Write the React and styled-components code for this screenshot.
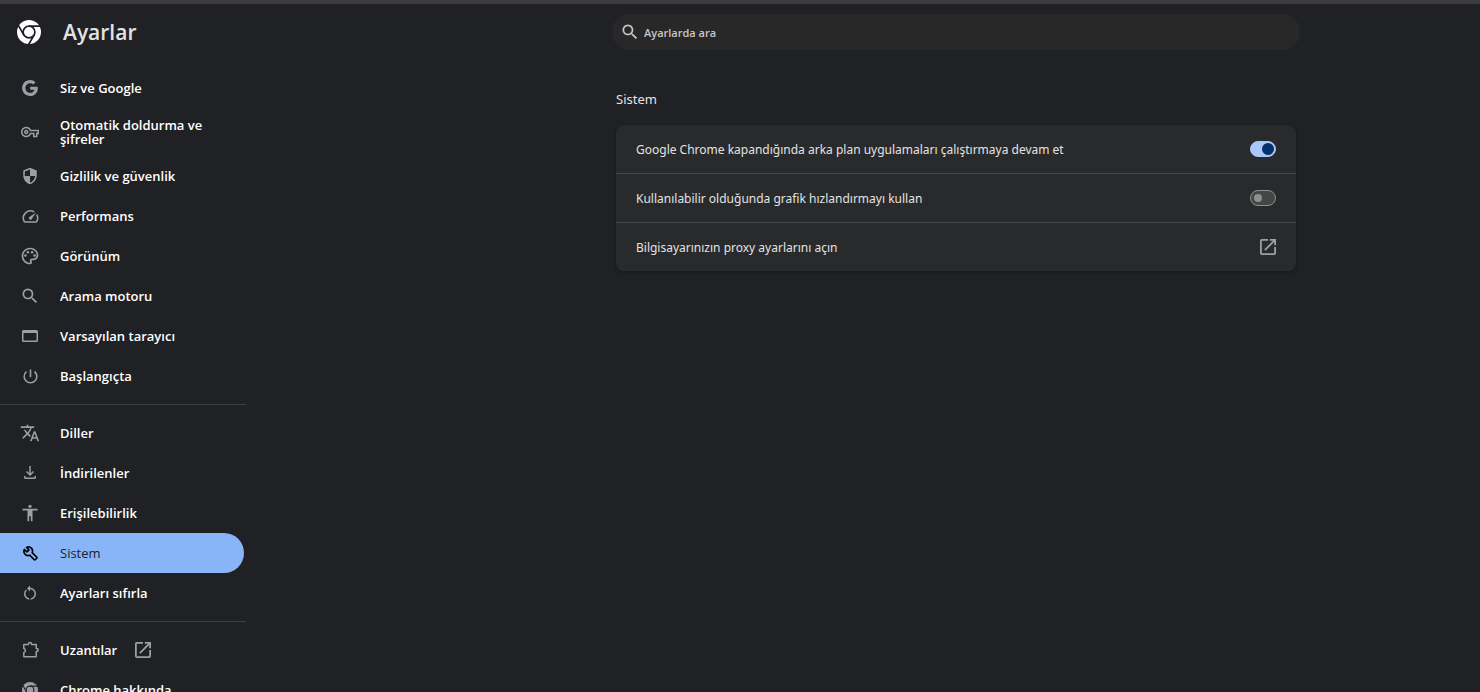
import React, { useState } from "react";
import styled, { createGlobalStyle } from "styled-components";
import {
  MdOutlinePalette,
  MdSearch,
  MdPowerSettingsNew,
  MdTranslate,
  MdAccessibility,
  MdOutlineVpnKey,
  MdRestartAlt,
} from "react-icons/md";

const GlobalStyle = createGlobalStyle`
  *, *::before, *::after { box-sizing: border-box; }
  body {
    margin: 0;
    background: #202124;
    color: #e3e3e3;
    font-family: "Open Sans", "Noto Sans", sans-serif;
    font-size: 13px;
  }
`;

const Page = styled.div`
  display: flex;
  height: 100vh;
  overflow: hidden;
  border-top: 4px solid #3c3c3c;
`;

const Sidebar = styled.aside`
  flex: 0 0 246px;
  overflow: hidden;
`;

const Brand = styled.header`
  display: flex;
  align-items: center;
  gap: 22px;
  height: 64px;
  padding: 0 0 8px 17px;
  color: #fff;
`;

const Title = styled.h1`
  margin: 0;
  color: #e3e3e3;
  font-size: 21px;
  font-weight: 600;
  line-height: 28px;
`;

const Group = styled.ul`
  margin: 0;
  padding: 0 0 8px;
  list-style: none;

  & + & {
    padding-top: 8px;
    border-top: 1px solid #3c3e41;
  }
`;

const NavLink = styled.a`
  display: flex;
  align-items: center;
  gap: 20px;
  min-height: 40px;
  margin-right: 2px;
  padding: 10px 20px;
  border-radius: 0 20px 20px 0;
  background: ${(p) => (p.$active ? "#8ab4f8" : "transparent")};
  color: ${(p) => (p.$active ? "#202124" : "#fff")};
  font-weight: ${(p) => (p.$active ? 500 : 600)};
  line-height: 14px;
  text-decoration: none;
`;

const IconSlot = styled.span`
  display: flex;
  flex: 0 0 20px;
  align-items: center;
  justify-content: center;
  height: 20px;
  color: ${(p) => (p.$dark ? "#000" : "#9aa0a6")};
`;

const LinkText = styled.span`
  display: flex;
  align-items: center;
  gap: 18px;

  svg {
    color: #9aa0a6;
  }
`;

const Main = styled.main`
  flex: 1;
  min-width: 0;
  padding: 10px 0 0 186px;
`;

const SearchBox = styled.label`
  display: flex;
  align-items: center;
  gap: 4px;
  max-width: 688px;
  height: 36px;
  margin: 0 auto;
  padding: 0 8px;
  border-radius: 18px;
  background: #282828;
  color: #c7c7c7;
`;

const SearchInput = styled.input`
  flex: 1;
  min-width: 0;
  padding: 0;
  border: 0;
  outline: 0;
  background: transparent;
  color: #e3e3e3;
  font: 600 11px "Open Sans", "Noto Sans", sans-serif;

  &::placeholder {
    color: #c7c7c7;
    opacity: 1;
  }
`;

const Section = styled.section`
  max-width: 680px;
  margin: 0 auto;
  padding-top: 39px;
`;

const SectionTitle = styled.h2`
  margin: 0 0 16px;
  font-family: "Noto Sans", sans-serif;
  font-size: 13px;
  font-weight: 400;
  line-height: 20px;
`;

const Card = styled.div`
  border-radius: 8px;
  background: #292a2c;
  box-shadow: 0 1px 3px 1px rgba(0, 0, 0, 0.2);
`;

const Row = styled.label`
  display: flex;
  align-items: center;
  justify-content: space-between;
  height: 48px;
  padding: 0 20px;
  color: inherit;
  font-family: "Noto Sans", sans-serif;
  font-size: 12px;
  text-decoration: none;

  & + & {
    height: 49px;
    border-top: 1px solid #47484a;
  }

  svg {
    color: #9aa0a6;
  }
`;

const Switch = styled.input`
  appearance: none;
  display: flex;
  align-items: center;
  width: 26px;
  height: 16px;
  margin: 0;
  padding: 0 3px;
  border: 1px solid #8f918f;
  border-radius: 8px;
  background: #444746;

  &::before {
    content: "";
    width: 8px;
    height: 8px;
    border-radius: 50%;
    background: #8f918f;
  }

  &:checked {
    justify-content: flex-end;
    padding: 0 1px;
    border-color: #a8c7fa;
    background: #a8c7fa;
  }

  &:checked::before {
    width: 12px;
    height: 12px;
    background: #062e6f;
  }
`;

const Svg = ({ size, box = 24, children }) => (
  <svg width={size} height={size} viewBox={`0 0 ${box} ${box}`} fill="currentColor" aria-hidden="true">
    {children}
  </svg>
);

const ChromeIcon = ({ size }) => (
  <Svg size={size}>
    <circle cx="12" cy="12" r="12" />
    <g fill="none" stroke="#202124" strokeWidth="1.7">
      <circle cx="12" cy="12" r="5.9" />
      <path d="M12 6.1H24M6.9 14.95.9 4.56M17.1 14.95l-6 10.39" />
    </g>
  </Svg>
);

const GoogleIcon = () => (
  <Svg size={16}>
    <path d="M12.2 10v4.5h6.3c-.5 2.7-2.9 4.7-6.3 4.7-3.900 0-7.100-3.200-7.100-7.200s3.200-7.200 7.100-7.200c1.800 0 3.400.6 4.600 1.800l3.400-3.400C18.100 1.200 15.400 0 12.200 0 5.500 0 .2 5.400.2 12s5.300 12 12 12c6.900 0 11.500-4.900 11.500-11.700 0-.8-.1-1.600-.2-2.300z" />
  </Svg>
);

const ShieldIcon = () => (
  <Svg size={18}>
    <path
      fillRule="evenodd"
      d="M12 1 3 4.500v6.500c0 5.600 3.800 10.700 9 12 5.200-1.300 9-6.400 9-12V4.500zM12 3.300V12h6.900c-.5 4.100-3.300 7.700-6.900 8.900V12H5.100V6z"
    />
  </Svg>
);

const SpeedIcon = () => (
  <Svg size={19}>
    <path d="m20.380 8.570-1.230 1.850a8 8 0 0 1-.22 7.580H5.070A8 8 0 0 1 15.580 6.850l1.850-1.230A10 10 0 0 0 3.350 19a2 2 0 0 0 1.720 1h13.850a2 2 0 0 0 1.740-1 10 10 0 0 0-.27-10.440zm-9.790 6.840a2 2 0 0 0 2.830 0l5.660-8.490-8.490 5.660a2 2 0 0 0 0 2.830z" />
  </Svg>
);

const WindowIcon = () => (
  <Svg size={20} box={20}>
    <path
      fillRule="evenodd"
      d="M3.500 4h13A1.500 1.500 0 0 1 18 5.500v9a1.500 1.500 0 0 1-1.500 1.500h-13A1.500 1.500 0 0 1 2 14.500v-9A1.500 1.500 0 0 1 3.500 4zm0 3v7.500h13V7z"
    />
  </Svg>
);

const DownloadIcon = () => (
  <Svg size={20} box={20}>
    <path d="M10 13 6 9l1.060-1.060 2.190 2.190V3h1.500v7.130l2.190-2.190L14 9zm-4.500 3c-.8 0-1.500-.7-1.500-1.500V13h1.500v1.500h9V13H16v1.500c0 .8-.7 1.500-1.500 1.500z" />
  </Svg>
);

const WrenchIcon = () => (
  <Svg size={15}>
    <path
      fill="none"
      stroke="currentColor"
      strokeWidth="2.700"
      strokeLinejoin="round"
      d="M2.300 5.600 6.200 9.500 9.500 6.200 5.700 2.400C8.300 1.100 11.400 1.500 13.400 3.500c1.900 1.900 2.300 4.700 1.300 7.200l7.300 7.300c.5.500.5 1.100 0 1.600l-2.400 2.400c-.5.500-1.100.5-1.600 0l-7.300-7.300c-2.500 1-5.300.6-7.200-1.300-2.100-2.100-2.500-5.200-1.200-7.800z"
    />
  </Svg>
);

const ExtensionIcon = () => (
  <Svg size={20} box={20}>
    <path
      fill="none"
      stroke="currentColor"
      strokeWidth="1.500"
      strokeLinejoin="round"
      d="M3.800 4.500H8.500V4a1.500 1.500 0 0 1 3 0v.5h4.700V8.500h.5a1.500 1.500 0 0 1 0 3h-.5v5.200H3.800v-4a2.200 2.200 0 0 0 0-4.200z"
    />
  </Svg>
);

const OpenIcon = () => (
  <Svg size={16} box={18}>
    <path d="M16 16H2V2h7V0H2a2 2 0 0 0-2 2v14a2 2 0 0 0 2 2h14a2 2 0 0 0 2-2V9h-2zM11 0v2h3.590l-9.830 9.830 1.410 1.410L16 3.410V7h2V0z" />
  </Svg>
);

const GROUPS = [
  [
    ["Siz ve Google", <GoogleIcon />],
    ["Otomatik doldurma ve şifreler", <MdOutlineVpnKey size={18} />],
    ["Gizlilik ve güvenlik", <ShieldIcon />],
    ["Performans", <SpeedIcon />],
    ["Görünüm", <MdOutlinePalette size={20} />],
    ["Arama motoru", <MdSearch size={20} />],
    ["Varsayılan tarayıcı", <WindowIcon />],
    ["Başlangıçta", <MdPowerSettingsNew size={19} />],
  ],
  [
    ["Diller", <MdTranslate size={20} />],
    ["İndirilenler", <DownloadIcon />],
    ["Erişilebilirlik", <MdAccessibility size={20} />],
    ["Sistem", <WrenchIcon />],
    ["Ayarları sıfırla", <MdRestartAlt size={18} />],
  ],
  [
    ["Uzantılar", <ExtensionIcon />],
    ["Chrome hakkında", <ChromeIcon size={16} />],
  ],
];

export default function App() {
  const [background, setBackground] = useState(true);
  const [graphics, setGraphics] = useState(false);

  return (
    <>
      <GlobalStyle />
      <Page>
        <Sidebar>
          <Brand>
            <ChromeIcon size={24} />
            <Title>Ayarlar</Title>
          </Brand>
          <nav aria-label="Ayarlar">
            {GROUPS.map((items, index) => (
              <Group key={index}>
                {items.map(([label, icon]) => (
                  <li key={label}>
                    <NavLink href="#" $active={label === "Sistem"}>
                      <IconSlot $dark={label === "Sistem"}>{icon}</IconSlot>
                      <LinkText>
                        {label}
                        {label === "Uzantılar" && <OpenIcon />}
                      </LinkText>
                    </NavLink>
                  </li>
                ))}
              </Group>
            ))}
          </nav>
        </Sidebar>
        <Main>
          <SearchBox>
            <MdSearch size={20} />
            <SearchInput type="text" placeholder="Ayarlarda ara" aria-label="Ayarlarda ara" />
          </SearchBox>
          <Section>
            <SectionTitle>Sistem</SectionTitle>
            <Card>
              <Row>
                Google Chrome kapandığında arka plan uygulamaları çalıştırmaya devam et
                <Switch
                  type="checkbox"
                  role="switch"
                  checked={background}
                  onChange={(e) => setBackground(e.target.checked)}
                />
              </Row>
              <Row>
                Kullanılabilir olduğunda grafik hızlandırmayı kullan
                <Switch
                  type="checkbox"
                  role="switch"
                  checked={graphics}
                  onChange={(e) => setGraphics(e.target.checked)}
                />
              </Row>
              <Row as="a" href="#">
                Bilgisayarınızın proxy ayarlarını açın
                <OpenIcon />
              </Row>
            </Card>
          </Section>
        </Main>
      </Page>
    </>
  );
}
